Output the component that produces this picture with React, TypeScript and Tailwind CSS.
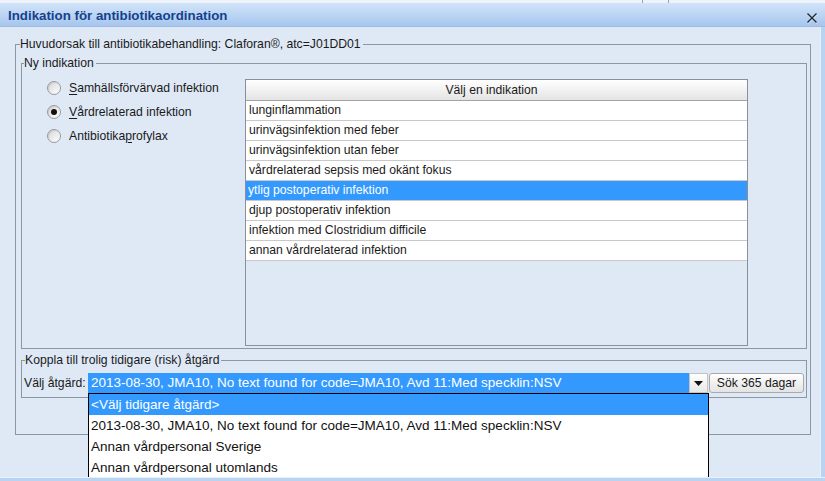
import React from 'react';

const indications = [
  'lunginflammation',
  'urinvägsinfektion med feber',
  'urinvägsinfektion utan feber',
  'vårdrelaterad sepsis med okänt fokus',
  'ytlig postoperativ infektion',
  'djup postoperativ infektion',
  'infektion med Clostridium difficile',
  'annan vårdrelaterad infektion',
];

const actions = [
  '<Välj tidigare åtgärd>',
  '2013-08-30, JMA10, No text found for code=JMA10, Avd 11:Med specklin:NSV',
  'Annan vårdpersonal Sverige',
  'Annan vårdpersonal utomlands',
];

const Radio: React.FC<{ checked?: boolean; children: React.ReactNode }> = ({ checked, children }) => (
  <div className="flex items-center h-[20px]">
    <span className="w-[14px] h-[14px] ml-[23px] rounded-full border border-[#9a9a9a] bg-gradient-to-br from-[#d6d6d6] to-white shadow-[inset_1px_1px_1px_rgba(0,0,0,0.08)] flex items-center justify-center shrink-0">
      {checked && <span className="w-[6px] h-[6px] rounded-full bg-[#111]" />}
    </span>
    <span className="ml-[8px] whitespace-nowrap">{children}</span>
  </div>
);

export default function App() {
  return (
    <div className="w-[825px] h-[481px] overflow-hidden flex flex-col bg-[#b7d1f0] font-['Liberation_Sans',Arial,sans-serif] text-[12.2px] text-[#1a1a1a]">
      {/* window behind */}
      <div className="h-[3px] bg-[#eef3f9] flex">
        <span className="ml-[642px] w-px h-[3px] bg-[#9aa6b4]" />
        <span className="ml-[25px] w-px h-[3px] bg-[#9aa6b4]" />
      </div>

      {/* title bar */}
      <div className="h-[24px] bg-gradient-to-b from-[#d2e4f9] to-[#a6c6ee] border-b border-[#9dbce4] flex items-center justify-between pl-[8px] pr-[7px]">
        <span className="mt-[3px] font-bold text-[13.3px] text-[#15428b] leading-none">Indikation för antibiotikaordination</span>
        <svg width="12" height="12" viewBox="0 0 12 12" className="mt-[6px]">
          <path d="M1.8 2.4 L10.8 11.4 M10.8 2.4 L1.8 11.4" stroke="#ffffff" strokeWidth="1.3" opacity="0.7" />
          <path d="M1.5 1.5 L10.5 10.5 M10.5 1.5 L1.5 10.5" stroke="#1f2733" strokeWidth="1.4" />
        </svg>
      </div>

      <div className="flex h-[450px]">
        <div className="w-[820px] h-[450px] bg-[#dfe9f6] overflow-hidden pt-[10px] pl-[15px]">
          <fieldset className="w-[796px] border border-[#8c97a5] pl-[5px] pr-[3px] pt-[5px] pb-[36px]">
            <legend className="-ml-px pr-[2px] leading-[14px] whitespace-nowrap">
              Huvudorsak till antibiotikabehandling: Claforan®, atc=J01DD01
            </legend>

            <fieldset className="border border-[#8c97a5] pl-[2px] pt-[9px] pb-[2px]">
              <legend className="pr-[2px] leading-[14px]">Ny indikation</legend>
              <div className="flex">
                <div className="w-[221px] shrink-0 flex flex-col gap-[4px] -mt-px">
                  <Radio>
                    <span className="underline underline-offset-2">S</span>amhällsförvärvad infektion
                  </Radio>
                  <Radio checked>
                    <span className="underline underline-offset-2">V</span>årdrelaterad infektion
                  </Radio>
                  <Radio>
                    Antibiotika<span className="underline underline-offset-2">p</span>rofylax
                  </Radio>
                </div>

                <div className="w-[503px] h-[267px] border border-[#8a9099] flex flex-col">
                  <div className="h-[21px] shrink-0 border-b border-[#a3a3a3] bg-gradient-to-b from-white to-[#e4e4e4] rounded-t-[2px] text-center leading-[20px] pr-[10px]">
                    Välj en indikation
                  </div>
                  {indications.map((t, i) => (
                    <div
                      key={t}
                      className={
                        i === 4
                          ? 'h-[20px] shrink-0 border-b border-[#c9c9c9] bg-[#3399ff] text-white leading-[19px] pl-[2px]'
                          : 'h-[20px] shrink-0 border-b border-[#c9c9c9] bg-white leading-[19px] pl-[3px]'
                      }
                    >
                      {t}
                    </div>
                  ))}
                </div>
              </div>
            </fieldset>

            <fieldset className="mt-[4px] border border-[#8c97a5] pl-[2px] pt-[6px] pb-[3px]">
              <legend className="ml-px pr-[2px] leading-[14px]">Koppla till trolig tidigare (risk) åtgärd</legend>
              <div className="flex items-start h-[21px]">
                <span className="w-[64px] shrink-0 leading-[20px] whitespace-nowrap">Välj åtgärd:</span>
                <div className="relative w-[620px] h-[20px] flex shrink-0">
                  <div className="flex-1 bg-[#3399ff] text-white text-[13.5px] leading-[20px] pl-[3px] whitespace-nowrap overflow-hidden">
                    {actions[1]}
                  </div>
                  <div className="w-[19px] h-[20px] bg-gradient-to-b from-white to-[#e8e8e8] border border-[#c4c4c4] flex items-center justify-center">
                    <svg width="9" height="5" viewBox="0 0 9 5">
                      <path d="M0 0 H9 L4.5 5 Z" fill="#111" />
                    </svg>
                  </div>

                  {/* open dropdown */}
                  <div className="absolute left-0 top-[20px] w-[621px] h-[100px] bg-white border border-black text-[13.5px] z-10">
                    {actions.map((a, i) => (
                      <div
                        key={a}
                        className={
                          i === 0
                            ? 'h-[21px] leading-[21px] pl-[2px] bg-[#3399ff] text-white whitespace-nowrap'
                            : 'h-[21px] leading-[21px] pl-[2px] text-[#111] whitespace-nowrap'
                        }
                      >
                        {a}
                      </div>
                    ))}
                  </div>
                </div>
                <button className="ml-px w-[95px] h-[20px] rounded-[3px] border border-[#a9a9a9] bg-gradient-to-b from-white to-[#e3e3e3] leading-[18px] text-center">
                  Sök 365 dagar
                </button>
              </div>
            </fieldset>
          </fieldset>
        </div>
        <div className="flex-1 bg-[#b9d4f2] border-l border-[#e8f1fb]" />
      </div>

      <div className="h-[4px] bg-[#b9d4f2] border-t border-[#e8f1fb]" />
    </div>
  );
}
